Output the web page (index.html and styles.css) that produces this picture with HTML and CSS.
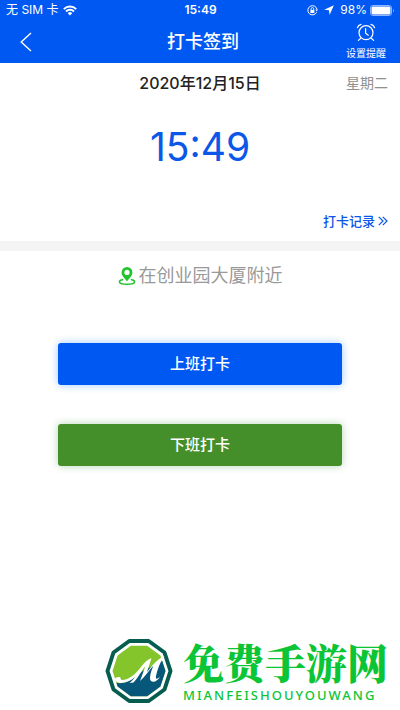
FILE: index.html
```html
<!DOCTYPE html>
<html lang="zh-CN">
<head>
<meta charset="utf-8">
<meta name="viewport" content="width=device-width, initial-scale=1">
<title>打卡签到</title>
<link rel="stylesheet" href="styles.css">
</head>
<body>
<div class="app">
  <header class="top">
    <div class="status">
      <div class="status-left">
        <span>无 SIM 卡</span>
        <svg width="14" height="11" viewBox="0 0 14 11" fill="none" stroke="#fff" stroke-width="1.9" aria-hidden="true"><path d="M.8 4.1a8.7 8.7 0 0 1 12.4 0M3 6.5a5.6 5.6 0 0 1 8 0"/><path d="M4.8 8.2a3.1 3.1 0 0 1 4.4 0L7 10.6z" fill="#fff" stroke="none"/></svg>
      </div>
      <span class="status-time">15:49</span>
      <div class="status-right">
        <svg width="11" height="11" viewBox="0 0 11 11" fill="none" stroke="#fff" aria-hidden="true"><path d="M9.6 7.3A4.6 4.6 0 1 1 10 4.5" stroke-width="1"/><path d="M8.4 4.4h2.5L9.8 6.6z" fill="#fff" stroke="none"/><path d="M3.4 5h4v3h-4z" fill="#fff" stroke="none"/><path d="M4.1 5V3.9a1.3 1.3 0 0 1 2.6 0V5" stroke-width=".9"/></svg>
        <svg width="10" height="10" viewBox="0 0 9 9" fill="#fff" aria-hidden="true"><path d="M8.9.2 5 8.9 4.5 4.7.2 4.2z"/></svg>
        <span>98%</span>
        <svg width="25" height="11" viewBox="0 0 25 11" aria-hidden="true"><rect x=".5" y=".5" width="21" height="10" rx="2.4" fill="none" stroke="#8bb5ff"/><rect x="1.5" y="1.5" width="19" height="8" rx="1.4" fill="#fff"/><path d="M23 3.5q1.6 2 0 4z" fill="#8bb5ff"/></svg>
      </div>
    </div>
    <nav class="nav">
      <button class="back" type="button" aria-label="返回">
        <svg width="12" height="20" viewBox="0 0 12 20" fill="none" stroke="#fff" stroke-width="1.4" aria-hidden="true"><path d="M11 1 1.2 10 11 19"/></svg>
      </button>
      <h1>打卡签到</h1>
      <button class="remind" type="button">
        <svg width="20" height="19" viewBox="0 0 20 19" fill="none" stroke="#fff" stroke-width="1.2" stroke-linecap="round" aria-hidden="true"><circle cx="10" cy="9.7" r="7"/><path d="M9.6 5.5v4.7l2.7 2M1.4 4.7Q2.3 2.1 5 1.4M18.6 4.7Q17.7 2.1 15 1.4M4.7 15.2l-2.3 2.2M15.3 15.2l2.3 2.2"/></svg>
        <span>设置提醒</span>
      </button>
    </nav>
  </header>
  <main>
    <section class="summary">
      <div class="date-row">
        <span class="date">2020年12月15日</span>
        <span class="weekday">星期二</span>
      </div>
      <time class="clock">15:49</time>
      <a class="records" href="#records">打卡记录
        <svg width="10" height="10" viewBox="0 0 10 10" fill="none" stroke="#0b57e8" stroke-width="1.2" aria-hidden="true"><path d="M.8.8 5 5 .8 9.2M4.8.8 9 5 4.8 9.2"/></svg>
      </a>
    </section>
    <section class="punch">
      <p class="place">
        <svg width="18" height="20" viewBox="0 0 18 20" aria-hidden="true"><path fill="#20c52d" fill-rule="evenodd" d="M9 1a5.4 5.4 0 0 0-5.4 5.4C3.6 9.7 6.6 12 9 15.2c2.4-3.2 5.4-5.5 5.4-8.8A5.4 5.4 0 0 0 9 1zm0 2.8a2.6 2.6 0 1 1 0 5.2A2.6 2.6 0 0 1 9 3.8z"/><path d="M5.2 13.5C2.8 13.9 1.4 14.7 1.4 15.7c0 1.4 3.3 2.5 7.6 2.5s7.6-1.1 7.6-2.5c0-1-1.4-1.8-3.8-2.2" fill="none" stroke="#20c52d" stroke-width="1.5"/></svg>
        <span>在创业园大厦附近</span>
      </p>
      <button class="action action-in" type="button">上班打卡</button>
      <button class="action action-out" type="button">下班打卡</button>
    </section>
  </main>
  <footer class="brand">
    <svg width="68" height="68" viewBox="0 0 68 68" aria-hidden="true">
      <path d="M65.500 34 59.500 52.500 43.700 64H24.300L8.500 52.500 2.500 34 8.500 15.500 24.300 4h19.400l15.800 11.500z" fill="#fff" stroke="#075c50" stroke-width="4" stroke-linejoin="round"/>
      <path d="M60.500 34 55.400 49.600 42.200 59.200H25.800L12.600 49.600 7.500 34l5.100-15.600L25.800 8.800h16.400l13.200 9.600z" fill="#83c52b"/>
      <path d="M57.200 24 60.500 34 55.400 49.600 42.200 59.200H25.800L12.600 49.600 11.500 46C20 47 28 43 34 36z" fill="#07577b"/>
      <path d="M9.500 42c1.500-1.800 4-2.500 6-1.500 0 1.500.5 2.300 1.500 2.500 7-.5 13-5 19-13 3-4 6.500-7.500 10.500-9L42 35c5-6 9-12 17.500-16-4.500 6-7.300 14-8.500 20-.7 3.500 1 3.500 4 .5-2.500 6-10.500 7.500-10 1 .2-4 2-8.500 3.500-12-4.500 4.500-8 11-13.500 15.500L40.500 29c-4 4.500-7 11.500-12 16.500l-4 .5c2.500-2 4-4 5.500-6-4 3.500-9 5.800-14 6-3 .1-5.500-1.500-6.500-4z" fill="#fff"/>
    </svg>
    <div class="brand-copy">
      <strong>免费手游网</strong>
      <span>MIANFEISHOUYOUWANG</span>
    </div>
  </footer>
</div>
</body>
</html>
```
FILE: styles.css
```css
* { box-sizing: border-box; }

body {
  margin: 0;
  background: #fff;
  font-family: Inter, "Noto Sans CJK SC", sans-serif;
}

h1, p { margin: 0; }

button {
  padding: 0;
  border: 0;
  background: none;
  color: inherit;
  font: inherit;
  cursor: pointer;
}

svg { display: block; flex: none; }

.app {
  display: flex;
  flex-direction: column;
  min-height: 100vh;
}

.top { background: #0058f2; color: #fff; }

.status {
  display: grid;
  grid-template-columns: 1fr auto 1fr;
  align-items: center;
  height: 20px;
  padding: 0 5px 0 6px;
  font-size: 12px;
  line-height: 20px;
}

.status-left, .status-right {
  display: flex;
  align-items: center;
  gap: 4px;
}

.status-right { justify-content: flex-end; gap: 6px; }
.status-right span { margin-right: -3px; }
.status-time { font-weight: 600; }

.nav {
  display: grid;
  grid-template-columns: 1fr auto 1fr;
  align-items: center;
  height: 43px;
  padding: 0 14px 0 20px;
}

.back { justify-self: start; }

h1 {
  font-size: 18px;
  font-weight: 500;
  line-height: 42px;
}

.remind {
  display: flex;
  flex-direction: column;
  align-items: center;
  justify-self: end;
  gap: 3px;
  font-size: 10px;
  line-height: 16px;
}

.summary {
  display: flex;
  flex-direction: column;
  padding: 8px 12px 11px;
  border-bottom: 10px solid #f4f4f4;
}

.date-row {
  display: grid;
  grid-template-columns: 1fr auto 1fr;
  align-items: center;
  line-height: 24px;
}

.date {
  grid-column: 2;
  color: #222;
  font-size: 16px;
  font-weight: 500;
}

.weekday {
  justify-self: end;
  color: #8f8f8f;
  font-size: 14px;
}

.clock {
  margin: 28px 0 41px;
  color: #0b57e8;
  font-size: 39px;
  line-height: 48px;
  text-align: center;
}

.records {
  display: flex;
  align-items: center;
  align-self: flex-end;
  gap: 3px;
  color: #0b57e8;
  font-size: 13px;
  font-weight: 500;
  line-height: 18px;
  text-decoration: none;
}

.punch {
  display: flex;
  flex-direction: column;
  align-items: center;
  padding: 13px 58px;
}

.place {
  display: flex;
  align-items: center;
  gap: 3px;
  margin-bottom: 55px;
  color: #999;
  font-size: 18px;
  line-height: 24px;
}

.action {
  width: 100%;
  height: 42px;
  border-radius: 3px;
  color: #fff;
  font-size: 15px;
  font-weight: 500;
  line-height: 40px;
}

.action-in {
  margin-bottom: 39px;
  background: #0058f2;
  box-shadow: 0 0 8px #9dcaff;
}

.action-out {
  background: #448f29;
  box-shadow: 0 0 8px #b5d5b5;
}

.brand {
  display: flex;
  align-items: center;
  justify-content: flex-end;
  gap: 10px;
  margin-top: auto;
  padding: 0 12px 5px 0;
}

.brand-copy {
  display: flex;
  flex-direction: column;
  color: #0cc536;
}

.brand-copy strong {
  font-family: "Noto Serif CJK SC", "Noto Sans CJK SC", serif;
  font-size: 41px;
  font-weight: 900;
  line-height: 48px;
}

.brand-copy span {
  font-family: "Noto Sans", sans-serif;
  font-size: 13px;
  font-weight: 500;
  letter-spacing: 2px;
  line-height: 18px;
}
```
